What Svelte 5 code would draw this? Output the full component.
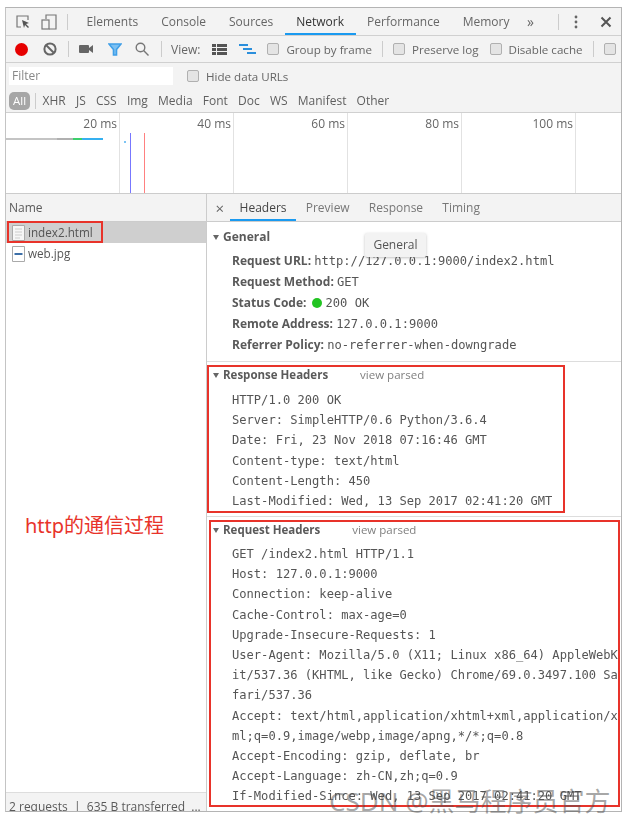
<script>
  const tabs = ['Elements', 'Console', 'Sources', 'Network', 'Performance', 'Memory'];
  const types = ['XHR', 'JS', 'CSS', 'Img', 'Media', 'Font', 'Doc', 'WS', 'Manifest', 'Other'];
  const marks = ['20 ms', '40 ms', '60 ms', '80 ms', '100 ms'];
  const detailTabs = ['Headers', 'Preview', 'Response', 'Timing'];
  const responseHeaders = [
    'HTTP/1.0 200 OK',
    'Server: SimpleHTTP/0.6 Python/3.6.4',
    'Date: Fri, 23 Nov 2018 07:16:46 GMT',
    'Content-type: text/html',
    'Content-Length: 450',
    'Last-Modified: Wed, 13 Sep 2017 02:41:20 GMT'
  ];
  const requestHeaders = [
    'GET /index2.html HTTP/1.1',
    'Host: 127.0.0.1:9000',
    'Connection: keep-alive',
    'Cache-Control: max-age=0',
    'Upgrade-Insecure-Requests: 1',
    'User-Agent: Mozilla/5.0 (X11; Linux x86_64) AppleWebK',
    'it/537.36 (KHTML, like Gecko) Chrome/69.0.3497.100 Sa',
    'fari/537.36',
    'Accept: text/html,application/xhtml+xml,application/x',
    'ml;q=0.9,image/webp,image/apng,*/*;q=0.8',
    'Accept-Encoding: gzip, deflate, br',
    'Accept-Language: zh-CN,zh;q=0.9',
    'If-Modified-Since: Wed, 13 Sep 2017 02:41:20 GMT'
  ];
</script>

<div class="shot">
  <div class="devtools">
    <div class="tabbar">
      <svg class="ic first" width="16" height="16" viewBox="0 0 16 16" fill="none">
        <path d="M6 13H2V2h11v4" stroke="#777" stroke-width="1.2"/>
        <path d="M7 6l7 3-3 1 3 3-1 1-3-3-1 3z" fill="#555"/>
      </svg>
      <svg class="ic second" width="16" height="16" viewBox="0 0 16 16" fill="none">
        <path d="M5 5V1h10v14H8" stroke="#777" stroke-width="1.2"/>
        <rect x="1" y="6" width="7" height="9" stroke="#777" stroke-width="1.2"/>
      </svg>
      <span class="sep tabsep"></span>
      {#each tabs as t}
        <span class="tab" class:on={t === 'Network'}>{t}</span>
      {/each}
      <span class="more">»</span>
      <span class="sep moresep"></span>
      <svg class="dots" width="4" height="14" viewBox="0 0 4 14" fill="#666">
        <circle cx="2" cy="2" r="1.4"/><circle cx="2" cy="7" r="1.4"/><circle cx="2" cy="12" r="1.4"/>
      </svg>
      <svg class="close" width="12" height="12" viewBox="0 0 12 12" stroke="#555" stroke-width="2">
        <path d="M1.5 1.5l9 9M10.5 1.5l-9 9"/>
      </svg>
    </div>

    <div class="toolbar">
      <span class="record"></span>
      <svg class="block" width="14" height="14" viewBox="0 0 14 14" fill="none" stroke="#666" stroke-width="2">
        <circle cx="7" cy="7" r="5.6"/><path d="M3 3l8 8"/>
      </svg>
      <span class="sep s1"></span>
      <svg class="cam" width="14" height="10" viewBox="0 0 14 10" fill="#666">
        <rect x="0" y="1" width="10" height="8" rx="1"/><path d="M10 4l4-3v8l-4-3z"/>
      </svg>
      <svg class="funnel" width="14" height="13" viewBox="0 0 14 13" fill="none" stroke="#3f9fe8" stroke-width="1.6">
        <path d="M1 1h12L8.500 6.500V12h-3V6.500z" fill="#7cc0f2"/>
      </svg>
      <svg class="search" width="14" height="14" viewBox="0 0 14 14" fill="none" stroke="#777" stroke-width="1.4">
        <circle cx="5.500" cy="5.500" r="4.300"/><path d="M8.600 8.600L13.500 13.500"/>
      </svg>
      <span class="sep s2"></span>
      <span class="view">View:</span>
      <svg class="list" width="15" height="11" viewBox="0 0 15 11" fill="#555">
        <path d="M0 0h4v3H0zM5 0h10v3H5zM0 4h4v3H0zM5 4h10v3H5zM0 8h4v3H0zM5 8h10v3H5z"/>
      </svg>
      <svg class="fall" width="17" height="11" viewBox="0 0 17 11" fill="#2b8fdc">
        <path d="M0 0h9v2H0zM4 4h9v2H4zM8 8h9v2H8z"/>
      </svg>
      <span class="check c1"></span><span class="lbl">Group by frame</span>
      <span class="sep s3"></span>
      <span class="check c2"></span><span class="lbl">Preserve log</span>
      <span class="check c3"></span><span class="lbl">Disable cache</span>
      <span class="sep s4"></span>
      <span class="check c4"></span>
    </div>

    <div class="filterbar">
      <span class="filter">Filter</span>
      <span class="check c5"></span><span class="lbl">Hide data URLs</span>
    </div>

    <div class="typebar">
      <span class="all">All</span>
      <span class="sep s5"></span>
      {#each types as t}
        <span class="type">{t}</span>
      {/each}
    </div>

    <div class="overview">
      {#each marks as m}
        <div class="mark">{m}</div>
      {/each}
      <div class="flow">
        <i class="b1"></i><i class="b2"></i><i class="b3"></i><i class="b4"></i>
      </div>
      <i class="dot"></i>
      <i class="vline blue"></i>
      <i class="vline red"></i>
    </div>

    <div class="split">
      <div class="left">
        <div class="namehead">Name</div>
        <div class="row sel">
          <svg width="13" height="16" viewBox="0 0 13 16">
            <path d="M.5.5h12v15H.5z" fill="#f6f6f6" stroke="#aaa"/>
            <path d="M3 4h7M3 7h7M3 10h7M3 13h5" stroke="#ccc"/>
          </svg>
          <span>index2.html</span>
        </div>
        <div class="row">
          <svg width="13" height="16" viewBox="0 0 13 16">
            <path d="M.5.500h12v15H.5z" fill="#fff" stroke="#aaa"/>
            <path d="M2.500 8h8" stroke="#3d6fa8" stroke-width="2"/>
          </svg>
          <span>web.jpg</span>
        </div>
        <div class="grow"></div>
        <div class="status">2 requests &nbsp;|&nbsp; 635 B transferred &nbsp;...</div>
      </div>

      <div class="right">
        <div class="detailtabs">
          <span class="x">×</span>
          {#each detailTabs as t}
            <span class="dtab" class:on={t === 'Headers'}>{t}</span>
          {/each}
        </div>
        <div class="scroll">
          <section class="general">
            <h4>General</h4>
            <p><b>Request URL:</b> <code>http://127.0.0.1:9000/index2.html</code></p>
            <p><b>Request Method:</b> <code>GET</code></p>
            <p><b>Status Code:</b> <i class="green"></i><code>200 OK</code></p>
            <p><b>Remote Address:</b> <code>127.0.0.1:9000</code></p>
            <p><b>Referrer Policy:</b> <code>no-referrer-when-downgrade</code></p>
            <div class="tip">General</div>
          </section>
          <section class="response">
            <h4>Response Headers<span class="parsed">view parsed</span></h4>
            {#each responseHeaders as l}<p><code>{l}</code></p>{/each}
          </section>
          <section class="request">
            <h4>Request Headers<span class="parsed">view parsed</span></h4>
            {#each requestHeaders as l}<p><code>{l}</code></p>{/each}
          </section>
        </div>
      </div>
    </div>
  </div>

  <div class="box box-name"></div>
  <div class="box box-res"></div>
  <div class="box box-req"></div>
  <div class="note">http的通信过程</div>
  <div class="mark-csdn">CSDN @黑马程序员官方</div>
</div>

<style>
  :global(body) {
    margin: 0;
    background: #fff;
  }
  .shot {
    position: relative;
    width: 633px;
    height: 823px;
    overflow: hidden;
    box-sizing: border-box;
    padding: 7px 0 0 5px;
    font-family: "Open Sans", "Noto Sans", sans-serif;
    font-size: 12px;
    color: #5a5a5a;
  }
  .devtools {
    width: 617px;
    height: 805px;
    box-sizing: border-box;
    border: 1px solid #b4b4b4;
    border-left-color: #c4c4c4;
    display: flex;
    flex-direction: column;
    background: #fff;
    overflow: hidden;
    filter: blur(0.5px);
  }
  .tabbar, .toolbar, .filterbar, .typebar {
    display: flex;
    align-items: center;
    background: #f3f3f3;
    border-bottom: 1px solid #d0d0d0;
    box-sizing: border-box;
    flex: none;
    white-space: nowrap;
  }
  .tabbar svg, .toolbar svg { flex: none; }
  .tabbar { height: 28px; }
  .toolbar { height: 27px; }
  .filterbar { height: 26px; border-bottom: 0; }
  .typebar { height: 24px; }

  .ic.first { margin-left: 9px; }
  .ic.second { margin-left: 10px; }
  .sep { width: 1px; height: 16px; background: #ccc; flex: none; }
  .tabsep { margin: 0 7px 0 10px; }
  .tab {
    height: 100%;
    line-height: 27px;
    padding: 0 11.500px;
    box-sizing: border-box;
    color: #666;
  }
  .tab.on { color: #333; border-bottom: 2px solid #1a9af0; }
  .more { margin-left: 6px; font-size: 14px; color: #666; }
  .moresep { margin-left: 24px; }
  .dots { margin-left: 15px; }
  .close { margin-left: 22px; }

  .record {
    width: 13px; height: 13px; border-radius: 50%;
    background: #e60000; margin-left: 9px; flex: none;
  }
  .block { margin-left: 15px; }
  .s1 { margin-left: 11px; }
  .cam { margin-left: 10px; }
  .funnel { margin-left: 15px; }
  .search { margin-left: 13px; }
  .s2 { margin-left: 12px; }
  .view { margin-left: 9px; color: #666; }
  .list { margin-left: 12px; }
  .fall { margin-left: 12px; }
  .check {
    width: 10px; height: 10px; flex: none;
    background: #e4e4e4;
    border: 1px solid #b0b0b0;
    border-radius: 2px;
    margin-right: 7px;
  }
  .lbl { color: #666; font-size: 11.600px; }
  .c1 { margin-left: 11px; }
  .s3 { margin-left: 10px; }
  .c2 { margin-left: 10px; }
  .c3 { margin-left: 11px; }
  .s4 { margin-left: 10px; }
  .c4 { margin-left: 10px; }

  .filter {
    width: 164px; height: 18px; margin-left: 3px;
    background: #fff; color: #888; line-height: 18px;
    padding-left: 3px; box-sizing: border-box;
  }
  .c5 { margin-left: 14px; }

  .all {
    margin-left: 3px; width: 21px; height: 18px; line-height: 18px;
    background: #a6a6a6; color: #fff; text-align: center;
    border-radius: 5px; font-size: 11.500px;
  }
  .s5 { margin: 0 1.500px 0 5px; }
  .type { padding: 0 5.100px; color: #5f5f5f; }

  .overview {
    position: relative;
    height: 81px;
    flex: none;
    display: flex;
    border-bottom: 1px solid #ccc;
    box-sizing: border-box;
  }
  .mark {
    width: 114px;
    box-sizing: border-box;
    flex: none;
    text-align: right;
    padding: 2px 2px 0 0;
    border-right: 1px solid #e2e2e2;
    color: #666;
  }
  .flow {
    position: absolute; left: 0; top: 25px;
    display: flex; height: 2px;
  }
  .flow i { display: block; height: 100%; }
  .b1 { width: 51px; background: #c4c4c4; }
  .b2 { width: 16px; background: #b0b0b0; }
  .b3 { width: 9px; background: #3ccf6c; }
  .b4 { width: 21px; background: #35b0f0; }
  .dot {
    position: absolute; left: 118px; top: 28px;
    width: 2px; height: 2px; background: #7cc4f4;
  }
  .vline { position: absolute; top: 20px; bottom: 0; width: 1px; }
  .vline.blue { left: 124px; background: #7777ff; }
  .vline.red { left: 138px; background: #ff8080; }

  .split { flex: 1; display: flex; min-height: 0; }
  .left {
    width: 201px; flex: none;
    border-right: 1px solid #ccc;
    display: flex; flex-direction: column;
    box-sizing: border-box;
  }
  .namehead {
    height: 28px; line-height: 27px; padding-left: 3px;
    background: #f3f3f3; border-bottom: 1px solid #ccc;
    box-sizing: border-box; color: #5a5a5a; flex: none;
  }
  .row {
    height: 21px; display: flex; align-items: center; gap: 3px;
    padding-left: 6px; color: #555; flex: none;
  }
  .row span { font-size: 11.700px; margin-top: -2px; }
  .row.sel { background: #cfcfcf; }
  .grow { flex: 1; }
  .status {
    height: 19px; line-height: 28px; padding-left: 3px;
    background: #f3f3f3; border-top: 1px solid #ddd;
    box-sizing: border-box; white-space: nowrap; overflow: hidden; flex: none;
  }

  .right { flex: 1; min-width: 0; display: flex; flex-direction: column; }
  .detailtabs {
    height: 28px; flex: none; display: flex; align-items: center;
    background: #f3f3f3; border-bottom: 1px solid #ccc; box-sizing: border-box;
  }
  .x { width: 17px; margin-right: 6px; text-align: right; font-size: 15px; color: #666; flex: none; }
  .dtab {
    height: 100%; line-height: 27px; padding: 0 9.600px;
    box-sizing: border-box; color: #777;
  }
  .dtab.on { color: #444; border-bottom: 2px solid #1a9af0; }

  .scroll { flex: 1; overflow: hidden; }
  section { position: relative; border-bottom: 1px solid #ddd; padding: 5px 0 5.500px; }
  section.response { padding-top: 3px; padding-bottom: 5px; }
  section.request { padding-top: 3px; border-bottom: 0; }
  h4 {
    margin: 0 0 2.500px;
    font-size: 12px;
    line-height: 20px;
    font-weight: 700;
    color: #5a5a5a;
    padding-left: 16px;
    position: relative;
  }
  h4::before {
    content: "";
    position: absolute; left: 6px; top: 8px;
    border: 3.500px solid transparent;
    border-top: 5px solid #666;
    border-bottom: 0;
  }
  .response h4 { font-size: 11.500px; margin-bottom: 5px; }
  .request h4 { font-size: 11.500px; margin-bottom: 4px; }
  .parsed { font-weight: 400; margin-left: 32px; color: #808080; }
  p {
    margin: 0;
    padding-left: 25px;
    line-height: 20.200px;
    height: 20.200px;
    white-space: nowrap;
  }
  .general p { line-height: 21.200px; height: 21.200px; }
  b { font-weight: 700; color: #5a5a5a; }
  code {
    font-family: "DejaVu Sans Mono", "Liberation Mono", monospace;
    font-size: 12.100px;
    color: #555;
  }
  .green {
    display: inline-block; width: 10px; height: 10px; border-radius: 50%;
    background: #22c422; margin: 0 4px 0 2px; vertical-align: -1px;
  }
  .tip {
    position: absolute; left: 158px; top: 11px;
    width: 61px; height: 24px; line-height: 24px; text-align: center;
    background: #f3f3f3; color: #555;
    box-shadow: 0 1px 3px rgba(0, 0, 0, .25);
    border-radius: 2px;
  }

  .box { position: absolute; border: 2px solid #e8332a; box-sizing: border-box; }
  .box-name { left: 7px; top: 221px; width: 96px; height: 22px; }
  .box-res { left: 207px; top: 365px; width: 358px; height: 148px; }
  .box-req { left: 209px; top: 520px; width: 411px; height: 287px; }
  .note {
    position: absolute; left: 25px; top: 513px;
    font-family: "Noto Sans", "Noto Sans CJK SC", sans-serif;
    font-size: 20px; line-height: 26px;
    color: #e8332a;
  }
  .mark-csdn {
    position: absolute; left: 329px; top: 784px;
    font-family: "Noto Sans", "Noto Sans CJK SC", sans-serif;
    font-size: 26px; line-height: 34px; white-space: nowrap;
    color: rgba(80, 80, 80, .5);
  }
</style>
